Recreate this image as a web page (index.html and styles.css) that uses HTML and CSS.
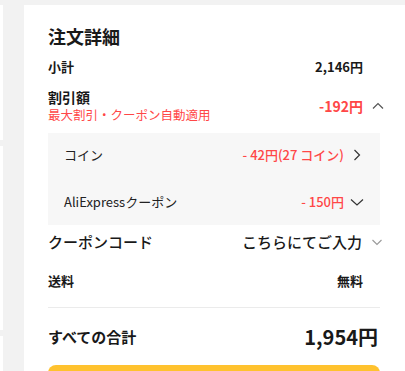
FILE: index.html
```html
<!DOCTYPE html>
<html lang="ja">
<head>
  <meta charset="UTF-8" />
  <meta name="viewport" content="width=device-width, initial-scale=1.0" />
  <title>注文詳細</title>
  <link rel="stylesheet" href="styles.css">
</head>
<body>
  <div class="page">
    <!-- 左側のカード（画面外） -->
    <div class="side">
      <div class="side-card first"></div>
      <div class="side-card second"></div>
      <div class="side-card third"></div>
    </div>

    <!-- 注文詳細 -->
    <div class="summary">
      <div class="title">注文詳細</div>

      <div class="row subtotal">
        <span class="label">小計</span>
        <span class="value">2,146円</span>
        <span class="icon"></span>
      </div>

      <div class="row discount">
        <div class="label-group">
          <div class="label">割引額</div>
          <div class="note">最大割引・クーポン自動適用</div>
        </div>
        <span class="value red">-192円</span>
        <span class="icon">
          <svg width="12" height="12" viewBox="0 0 12 12"><polyline points="1,8.5 6,3.5 11,8.5" fill="none" stroke="#555" stroke-width="1.2"/></svg>
        </span>
      </div>

      <div class="detail-box">
        <div class="detail-row">
          <span class="detail-label">コイン</span>
          <span class="detail-value">- 42円(27 コイン)</span>
          <span class="icon">
            <svg width="12" height="12" viewBox="0 0 12 12"><polyline points="3.5,1 8.5,6 3.5,11" fill="none" stroke="#333" stroke-width="1.2"/></svg>
          </span>
        </div>
        <div class="detail-row">
          <span class="detail-label">AliExpressクーポン</span>
          <span class="detail-value">- 150円</span>
          <span class="icon">
            <svg width="14" height="12" viewBox="0 0 14 12"><polyline points="1,3.5 7,9 13,3.5" fill="none" stroke="#333" stroke-width="1.2"/></svg>
          </span>
        </div>
      </div>

      <div class="row coupon">
        <span class="label">クーポンコード</span>
        <span class="value">こちらにてご入力</span>
        <span class="icon">
          <svg width="12" height="12" viewBox="0 0 12 12"><polyline points="1.5,4 6,8.5 10.5,4" fill="none" stroke="#999" stroke-width="1.1"/></svg>
        </span>
      </div>

      <div class="row shipping">
        <span class="label">送料</span>
        <span class="value">無料</span>
        <span class="icon"></span>
      </div>

      <div class="divider"></div>

      <div class="row total">
        <span class="label">すべての合計</span>
        <span class="value">1,954円</span>
      </div>

      <button class="checkout" aria-label="注文する"></button>
    </div>
  </div>
</body>
</html>
```

FILE: styles.css
```css
html, body {
  overflow: hidden;
}

body {
  margin: 0;
  background-color: #f2f2f2;
  color: #191919;
  font-family: "Noto Sans CJK JP", "Noto Sans", sans-serif;
}

.page {
  display: flex;
  gap: 21px;
  padding-top: 5px;
  height: 366px;
}

.side {
  width: 3px;
  display: flex;
  flex-direction: column;
  gap: 6px;
}

.side-card {
  background-color: #fff;
}

.side-card.first {
  height: 135px;
}

.side-card.second {
  height: 184px;
}

.side-card.third {
  flex: 1;
}

.summary {
  flex: 1;
  background-color: #fff;
  padding: 19px 25px 0 24px;
}

.title {
  font-size: 18px;
  font-weight: bold;
  line-height: 24px;
  margin-bottom: 9px;
}

.row {
  display: flex;
  align-items: center;
}

.row .label {
  flex: 1;
}

.row .icon {
  width: 12px;
  margin-left: 5px;
  display: flex;
  justify-content: center;
}

.subtotal {
  font-size: 13px;
  font-weight: bold;
  line-height: 20px;
  margin-bottom: 12px;
}

.discount {
  margin-bottom: 11px;
}

.label-group {
  flex: 1;
}

.discount .label {
  font-size: 14px;
  font-weight: bold;
  line-height: 17px;
}

.note {
  font-size: 12.5px;
  line-height: 15px;
  margin-top: 1px;
  color: #ff4747;
}

.discount .value {
  font-size: 14px;
  font-weight: bold;
  margin-top: 1px;
}

.discount .icon {
  margin-left: 9px;
  margin-right: -4px;
}

.red {
  color: #ff4747;
}

.detail-box {
  background-color: #f7f7f7;
  padding: 0 16px;
}

.detail-row {
  display: flex;
  align-items: center;
  height: 47px;
  font-size: 13px;
}

.detail-row:first-child {
  padding-bottom: 2px;
  height: 43px;
}

.detail-label {
  flex: 1;
  color: #222;
}

.detail-value {
  color: #ff4747;
  font-weight: 500;
}

.detail-row .icon {
  width: 14px;
  margin-left: 6px;
  display: flex;
  justify-content: center;
}

.coupon {
  font-size: 15px;
  font-weight: 500;
  line-height: 24px;
  margin-top: 5px;
  margin-bottom: 17px;
}

.coupon .icon {
  margin-left: 9px;
  margin-right: -3px;
}

.shipping {
  font-size: 13px;
  font-weight: bold;
  line-height: 20px;
  margin-bottom: 16px;
}

.divider {
  height: 1px;
  background-color: #ebebeb;
}

.total {
  height: 57px;
}

.total .label {
  font-size: 15px;
  font-weight: bold;
}

.total .value {
  font-size: 20px;
  font-weight: bold;
  margin-right: 2px;
}

.checkout {
  display: block;
  width: 100%;
  height: 44px;
  border: none;
  border-radius: 8px;
  background-color: #ffc22e;
}
```
